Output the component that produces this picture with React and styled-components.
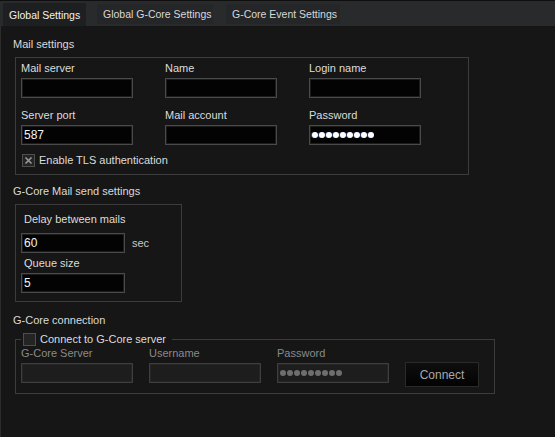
import styled, { createGlobalStyle } from "styled-components";

const GlobalStyle = createGlobalStyle`
  html, body {
    margin: 0;
    padding: 0;
    background: #161616;
  }
  body {
    font-family: "Liberation Sans", Arial, sans-serif;
    font-size: 11px;
    color: #dcdcdc;
  }
`;

const Window = styled.div`
  width: 555px;
  height: 437px;
  display: flex;
  flex-direction: column;
  background: #161616;
  overflow: hidden;
`;

const TabBar = styled.div`
  height: 25px;
  display: flex;
  align-items: flex-end;
  padding-left: 3px;
  background: #292a2c;
  border-top: 1px solid #0f0f10;
`;

const Tab = styled.div`
  width: ${(p) => p.$width}px;
  margin-left: ${(p) => p.$gap || 0}px;
  height: ${(p) => (p.$active ? "23px" : "20px")};
  margin-bottom: ${(p) => (p.$active ? "0" : "2px")};
  box-sizing: border-box;
  padding-left: 6px;
  display: flex;
  align-items: center;
  background: ${(p) => (p.$active ? "#1e1f21" : "#252628")};
  color: ${(p) => (p.$active ? "#f2f2f2" : "#d8d8d8")};
  font-size: 10.5px;
  white-space: nowrap;
`;

const Panel = styled.div`
  flex: 1;
  border-left: 1px solid #2c2c2c;
  padding: 12px 0 0 12px;
  display: flex;
  flex-direction: column;
`;

const SectionTitle = styled.div`
  line-height: 13px;
  height: 13px;
  margin-top: ${(p) => p.$top || 0}px;
  margin-bottom: 6px;
  color: #dadada;
`;

const GroupBox = styled.div`
  margin-left: 2px;
  width: ${(p) => p.$width}px;
  box-sizing: border-box;
  border: 1px solid #3c3c3c;
  padding: ${(p) => p.$pad};
`;

const FieldGrid = styled.div`
  display: grid;
  grid-template-columns: repeat(3, 112px) ${(p) => p.$extra || ""};
  column-gap: ${(p) => p.$colGap || 32}px;
  row-gap: 11px;
  align-items: end;
  margin-top: ${(p) => p.$top || 0}px;
`;

const Field = styled.div`
  display: flex;
  flex-direction: column;
  gap: ${(p) => p.$gap ?? 3}px;
  margin-top: ${(p) => p.$top || 0}px;
`;

const Label = styled.div`
  line-height: 13px;
  height: 13px;
  padding-left: ${(p) => p.$indent || 0}px;
  color: ${(p) => (p.$disabled ? "#8a8a8a" : "#dcdcdc")};
`;

const Input = styled.div`
  width: ${(p) => p.$width || 112}px;
  height: 20px;
  box-sizing: border-box;
  border: 1px solid ${(p) => (p.$disabled ? "#3e3e3e" : "#4a4a4a")};
  box-shadow: inset 0 0 0 1px ${(p) => (p.$disabled ? "#262626" : "#1c1c1c")};
  background: ${(p) => (p.$disabled ? "#1d1d1d" : "#030303")};
  color: #f4f4f4;
  display: flex;
  align-items: center;
  gap: 1px;
  padding-left: 2px;
  font-size: 12px;
`;

const Dot = styled.span`
  width: 6px;
  height: 6px;
  border-radius: 50%;
  background: ${(p) => (p.$disabled ? "#6e6e6e" : "#ffffff")};
  box-shadow: ${(p) => (p.$disabled ? "none" : "-1px 0 0 rgba(90,140,255,0.5)")};
`;

const CheckRow = styled.label`
  display: flex;
  align-items: center;
  gap: 4px;
  margin-top: ${(p) => p.$top || 0}px;
  margin-left: ${(p) => p.$left ?? 1}px;
  line-height: 13px;
  color: #dcdcdc;
  white-space: nowrap;
`;

const Box = styled.span`
  width: 13px;
  height: 13px;
  box-sizing: border-box;
  border: 1px solid #4e4e4e;
  background: #242424;
  display: flex;
  align-items: center;
  justify-content: center;
`;

const InlineRow = styled.div`
  display: flex;
  align-items: center;
  gap: 7px;
`;

const Unit = styled.span`
  color: #c8c8c8;
`;

const Fieldset = styled.fieldset`
  margin: 0 0 0 2px;
  width: 480px;
  box-sizing: border-box;
  border: 1px solid #3c3c3c;
  padding: 0 5px 10px 5px;
  min-width: 0;
`;

const Legend = styled.legend`
  padding: 0 6px 0 2px;
  margin-left: 0;
`;

const Button = styled.div`
  width: 74px;
  height: 25px;
  box-sizing: border-box;
  border: 1px solid #2a2a2a;
  background: linear-gradient(#0e0e0e, #030303);
  color: #a8a8a8;
  display: flex;
  align-items: center;
  justify-content: center;
  font-size: 12px;
  margin-bottom: -4px;
`;

function Dots({ count = 9, disabled }) {
  return Array.from({ length: count }).map((_, i) => (
    <Dot key={i} $disabled={disabled} />
  ));
}

function CheckBox({ checked }) {
  return (
    <Box>
      {checked && (
        <svg width="9" height="9" viewBox="0 0 9 9">
          <path d="M1.5 1.5 L7.5 7.5 M7.5 1.5 L1.5 7.5" stroke="#9a9a9a" strokeWidth="1.6" />
        </svg>
      )}
    </Box>
  );
}

export default function App() {
  return (
    <Window>
      <GlobalStyle />
      <TabBar>
        <Tab $active $width={83}>Global Settings</Tab>
        <Tab $gap={11} $width={116}>Global G-Core Settings</Tab>
        <Tab $gap={13} $width={114}>G-Core Event Settings</Tab>
      </TabBar>
      <Panel>
        <SectionTitle>Mail settings</SectionTitle>
        <GroupBox $width={454} $pad="4px 5px 7px 5px">
          <FieldGrid>
            <Field>
              <Label>Mail server</Label>
              <Input />
            </Field>
            <Field>
              <Label>Name</Label>
              <Input />
            </Field>
            <Field>
              <Label>Login name</Label>
              <Input />
            </Field>
            <Field>
              <Label>Server port</Label>
              <Input>587</Input>
            </Field>
            <Field>
              <Label>Mail account</Label>
              <Input />
            </Field>
            <Field>
              <Label>Password</Label>
              <Input>
                <Dots />
              </Input>
            </Field>
          </FieldGrid>
          <CheckRow $top={9}>
            <CheckBox checked />
            Enable TLS authentication
          </CheckRow>
        </GroupBox>

        <SectionTitle $top={10}>G-Core Mail send settings</SectionTitle>
        <GroupBox $width={167} $pad="8px 5px 8px 5px">
          <Field $gap={7}>
            <Label $indent={3}>Delay between mails</Label>
            <InlineRow>
              <Input $width={104}>60</Input>
              <Unit>sec</Unit>
            </InlineRow>
          </Field>
          <Field $top={4}>
            <Label $indent={3}>Queue size</Label>
            <Input $width={104}>5</Input>
          </Field>
        </GroupBox>

        <SectionTitle $top={12}>G-Core connection</SectionTitle>
        <Fieldset>
          <Legend>
            <CheckRow $left={0}>
              <CheckBox />
              Connect to G-Core server
            </CheckRow>
          </Legend>
          <FieldGrid $extra="74px" $colGap={16} $top={1}>
            <Field $gap={3}>
              <Label $disabled>G-Core Server</Label>
              <Input $disabled />
            </Field>
            <Field $gap={3}>
              <Label $disabled>Username</Label>
              <Input $disabled />
            </Field>
            <Field $gap={3}>
              <Label $disabled>Password</Label>
              <Input $disabled>
                <Dots disabled />
              </Input>
            </Field>
            <Button>Connect</Button>
          </FieldGrid>
        </Fieldset>
      </Panel>
    </Window>
  );
}
